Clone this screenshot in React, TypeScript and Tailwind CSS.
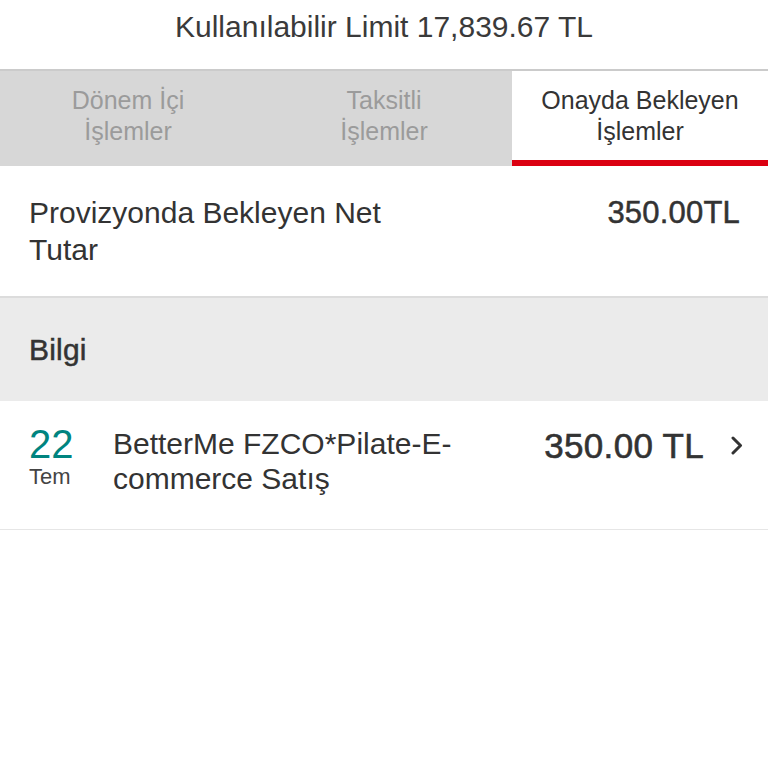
import React from 'react';

const tabs = [
  { label: ['Dönem İçi', 'İşlemler'], active: false },
  { label: ['Taksitli', 'İşlemler'], active: false },
  { label: ['Onayda Bekleyen', 'İşlemler'], active: true },
];

const Chevron = () => (
  <svg width="14" height="19" viewBox="0 0 14 19" fill="none" className="shrink-0">
    <path d="M3 2l7.5 7.5L3 17" stroke="#333333" strokeWidth="3" strokeLinecap="round" strokeLinejoin="round" />
  </svg>
);

const App = () => {
  return (
    <div className="w-[768px] h-[768px] bg-white text-[#333333] font-['Liberation_Sans',Arial,sans-serif] overflow-hidden">
      {/* limit header */}
      <div className="h-[69px] flex justify-center pt-[9px]">
        <span className="text-[30px] leading-[36px] text-[#3a3a3a]">Kullanılabilir Limit 17,839.67 TL</span>
      </div>
      <div className="h-[2px] bg-[#cbcbcb]" />

      {/* tabs */}
      <div className="grid grid-cols-3 h-[95px]">
        {tabs.map((t) => (
          <div
            key={t.label[0]}
            className={
              t.active
                ? 'bg-white border-b-[6px] border-[#db0011] flex flex-col items-center justify-center text-[#333333]'
                : 'bg-[#d7d7d7] border-b-[6px] border-[#d7d7d7] flex flex-col items-center justify-center text-[#9b9b9b]'
            }
          >
            <span className="text-[25px] leading-[31px] text-center">{t.label[0]}</span>
            <span className="text-[25px] leading-[31px] text-center">{t.label[1]}</span>
          </div>
        ))}
      </div>

      {/* pending total */}
      <div className="h-[130px] flex justify-between pl-[29px] pr-[28px] pt-[28px]">
        <p className="w-[420px] text-[30px] leading-[37px] text-[#333333]">Provizyonda Bekleyen Net Tutar</p>
        <span className="text-[31px] leading-[37px] text-[#333333] tracking-[0.2px] [-webkit-text-stroke:0.5px_#333333]">350.00TL</span>
      </div>
      <div className="h-[2px] bg-[#dcdcdc]" />

      {/* section header */}
      <div className="h-[103px] bg-[#ebebeb] flex items-center pl-[29px]">
        <span className="text-[30px] text-[#333333] tracking-[0.2px] [-webkit-text-stroke:0.5px_#333333]">Bilgi</span>
      </div>

      {/* transaction */}
      <div className="h-[129px] flex pl-[29px] pr-[24px] pt-[25px] border-b border-[#e6e6e6]">
        <div className="w-[84px] shrink-0 flex flex-col -mt-[2px]">
          <span className="text-[40px] leading-[40px] text-[#00847f]">22</span>
          <span className="text-[22px] leading-[22px] mt-[2px] text-[#444444]">Tem</span>
        </div>
        <p className="w-[410px] text-[30px] leading-[35px] text-[#333333]">BetterMe FZCO*Pilate-E-commerce Satış</p>
        <div className="flex-1 flex justify-end items-start gap-[26px]">
          <span className="text-[35px] leading-[40px] text-[#333333] tracking-[0.3px] [-webkit-text-stroke:0.6px_#333333]">350.00 TL</span>
          <div className="pt-[10px]">
            <Chevron />
          </div>
        </div>
      </div>
    </div>
  );
};

export default App;
